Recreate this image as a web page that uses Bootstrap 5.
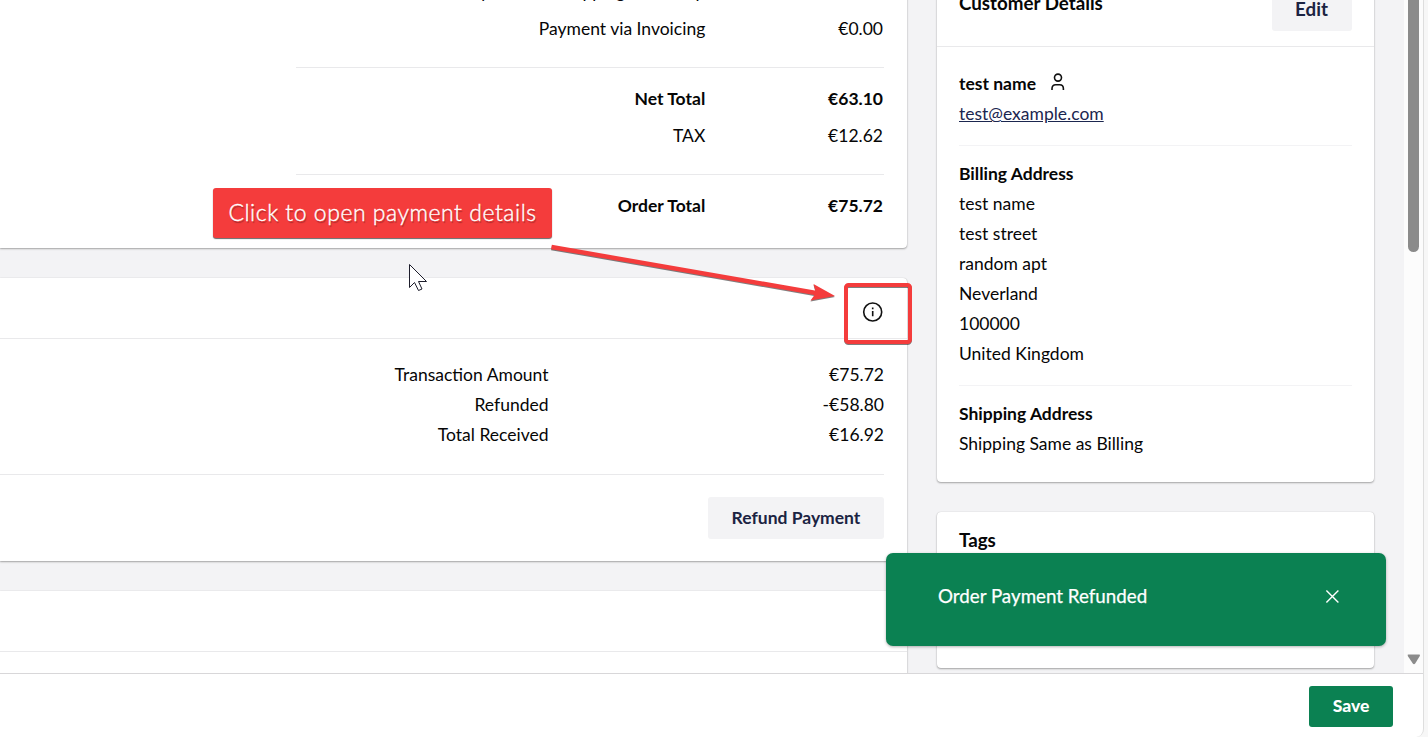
<!DOCTYPE html>
<html lang="en">
<head>
<meta charset="utf-8">
<title>Order</title>
<meta name="viewport" content="width=device-width, initial-scale=1">
<link rel="stylesheet" href="https://cdn.jsdelivr.net/npm/bootstrap@5.3.0/dist/css/bootstrap.min.css">
<script src="https://cdn.jsdelivr.net/npm/bootstrap@5.3.0/dist/js/bootstrap.bundle.min.js"></script>
<style>
  html, body { height: 100%; overflow: hidden; }
  body { font-family: Lato, sans-serif; font-size: 17.5px; line-height: 30px; color: #060606; background: #f7f7f7; }
  .app-window { width: 1424px; height: 737px; background: #fff; border-right: 1px solid #dedede; border-bottom-right-radius: 8px; overflow: hidden; }
  .workspace { height: 673px; background: #f3f3f5; overflow: hidden; }
  .main-col { width: 907px; }
  .side-col { width: 437px; margin-left: 30px; }
  .panel { background: #fff; border-radius: 4px; box-shadow: 0 1px 2px 0 rgba(0,0,0,.32), 0 0 1px rgba(0,0,0,.2); }
  .main-col .panel { border-top-left-radius: 0; border-bottom-left-radius: 0; }
  .panel-totals { height: 268px; margin-top: -20px; padding-right: 23px; margin-bottom: 30px; }
  .totals { width: 588px; margin-top: -7px; }
  .totals-row { height: 37px; line-height: 37px; padding-right: 1px; }
  .totals-name { width: 409.25px; text-align: right; white-space: nowrap; }
  .rule { border-top: 1px solid #e9e9eb; }
  .totals .rule { margin: 20px 0 12px; }
  .rule-faint { border-top: 1px solid #f3f3f5; margin: 16px 0 13px; }
  .panel-payment { height: 283px; margin-bottom: 30px; }
  .panel-top { height: 61px; border-bottom: 1px solid #e9e9eb; }
  .info-icon { margin: 7px 23px 0 0; }
  .payment-body { padding: 21px 23px 0 0; }
  .payment-name { width: 548.5px; text-align: right; }
  .panel-next { height: 120px; }
  .btn-soft { --bs-btn-bg: #f3f3f5; --bs-btn-color: #1b2342; --bs-btn-font-weight: 700; --bs-btn-border-radius: 3px; --bs-btn-border-width: 0; --bs-btn-hover-bg: #e9e9eb; font-size: 17.5px; line-height: 42px; padding: 0; }
  .btn-refund { width: 176px; margin-top: 22px; }
  .btn-edit { width: 80px; font-size: 18.75px; line-height: 40px; padding: 0 1px 2px 0; margin-bottom: 6px; }
  .btn-save { --bs-btn-bg: #0b8152; --bs-btn-color: #fff; --bs-btn-font-weight: 900; --bs-btn-border-radius: 3px; --bs-btn-border-width: 0; --bs-btn-hover-bg: #097047; --bs-btn-hover-color: #fff; width: 84px; height: 41px; padding: 0 0 2px; font-size: 17.5px; line-height: 39px; }
  .panel-customer { height: 502px; margin-top: -20px; margin-bottom: 30px; }
  .customer-top { height: 67px; padding: 0 22px; border-bottom: 1px solid #e9e9eb; }
  .customer-top .head-text { margin-bottom: 20px; }
  .customer-body { padding: 22px 22px 0; }
  .person-icon { margin: 0 0 4px 15px; }
  .mail { color: #1b264f; }
  .panel-tags { height: 156px; padding: 13px 22px; }
  .head-text { font-size: 18.75px; font-weight: 700; }
  .scroll-track { width: 19px; background: #fcfcfc; }
  .scroll-thumb { width: 11px; height: 272px; margin-top: -20px; border-radius: 6px; background: #8b8b8b; }
  .scroll-down { margin-bottom: 8px; }
  .action-bar { height: 64px; border-top: 1px solid #d8d7d9; padding: 12px 30px 0 0; }
  .toast-box { left: 886px; top: 553px; width: 500px; height: 93px; padding: 0 46px 6.5px 52px; border-radius: 7px; background: #0b8152; color: #fff; font-size: 18.75px; box-shadow: 0 1px 3px rgba(0,0,0,.3); -webkit-text-stroke: .25px #fff; }
  .callout { left: 213px; top: 188px; width: 339px; height: 50px; line-height: 49px; border-radius: 3px; background: #f43c3c; color: #fff; font-size: 23px; font-weight: 300; -webkit-text-stroke: .4px #fff; letter-spacing: .52px; text-shadow: 1px 2px 1px rgba(0,0,0,.3); box-shadow: 0 1px 1px rgba(0,0,0,.6); white-space: nowrap; }
  .overlay-art { left: 0; top: 0; pointer-events: none; }
  .marks { filter: drop-shadow(0 1px .6px rgba(0,0,0,.5)); }
</style>
</head>
<body class="position-relative">
<div class="app-window d-flex flex-column">
  <main class="workspace d-flex align-items-start">
    <div class="main-col flex-shrink-0">
      <section class="panel panel-totals d-flex justify-content-end">
        <div class="totals flex-shrink-0">
          <div class="totals-row d-flex"><span class="totals-name">Payment via Shipping on Pickup</span></div>
          <div class="totals-row d-flex justify-content-between"><span class="totals-name">Payment via Invoicing</span><span>€0.00</span></div>
          <div class="rule"></div>
          <div class="totals-row d-flex justify-content-between fw-bold"><span class="totals-name">Net Total</span><span>€63.10</span></div>
          <div class="totals-row d-flex justify-content-between"><span class="totals-name">TAX</span><span>€12.62</span></div>
          <div class="rule"></div>
          <div class="totals-row d-flex justify-content-between fw-bold"><span class="totals-name">Order Total</span><span>€75.72</span></div>
        </div>
      </section>
      <section class="panel panel-payment">
        <div class="panel-top d-flex justify-content-end align-items-center">
          <svg class="info-icon" width="22" height="22" viewBox="0 0 22 22" fill="none" stroke="#111" stroke-width="1.6"><circle cx="10.7" cy="11" r="9"/><path d="M10.7 10v5.2M10.7 6.6v1.7"/></svg>
        </div>
        <div class="payment-body">
          <div class="d-flex justify-content-between"><span class="payment-name">Transaction Amount</span><span>€75.72</span></div>
          <div class="d-flex justify-content-between"><span class="payment-name">Refunded</span><span>-€58.80</span></div>
          <div class="d-flex justify-content-between"><span class="payment-name">Total Received</span><span>€16.92</span></div>
          <div class="rule mt-4"></div>
          <div class="d-flex justify-content-end"><button class="btn btn-soft btn-refund" type="button">Refund Payment</button></div>
        </div>
      </section>
      <section class="panel panel-next"><div class="panel-top"></div></section>
    </div>
    <aside class="side-col flex-shrink-0">
      <section class="panel panel-customer">
        <div class="customer-top d-flex justify-content-between align-items-center">
          <span class="head-text">Customer Details</span>
          <button class="btn btn-soft btn-edit" type="button">Edit</button>
        </div>
        <div class="customer-body">
          <div class="d-flex align-items-center fw-bold">test name
            <svg class="person-icon" width="15" height="18" viewBox="0 0 15 18" fill="none" stroke="#111" stroke-width="1.6"><circle cx="7" cy="4.6" r="3.5"/><path d="M1 17v-1.3c0-2.5 1.4-4 3.700-4h4c2.300 0 3.700 1.500 3.700 4V17"/></svg>
          </div>
          <div><a class="mail" href="#">test@example.com</a></div>
          <div class="rule-faint"></div>
          <div class="fw-bold">Billing Address</div>
          <div>test name</div>
          <div>test street</div>
          <div>random apt</div>
          <div>Neverland</div>
          <div>100000</div>
          <div>United Kingdom</div>
          <div class="rule-faint"></div>
          <div class="fw-bold">Shipping Address</div>
          <div>Shipping Same as Billing</div>
        </div>
      </section>
      <section class="panel panel-tags"><span class="head-text">Tags</span></section>
    </aside>
    <div class="scroll-track h-100 ms-auto d-flex flex-column align-items-center justify-content-between">
      <div class="scroll-thumb"></div>
      <svg class="scroll-down" width="14" height="11" viewBox="0 0 14 11"><path d="M1.5.5h10.500q1.500 0 .8 1.400L8.200 9.400q-1.200 1.500-2.400 0L.8 1.900Q.1.5 1.5.5z" fill="#8b8b8b"/></svg>
    </div>
  </main>
  <footer class="action-bar d-flex justify-content-end align-items-start"><button class="btn btn-save" type="button">Save</button></footer>
</div>
<div class="toast-box position-absolute d-flex align-items-center justify-content-between">
  <span>Order Payment Refunded</span>
  <svg width="16" height="16" viewBox="0 0 16 16" stroke="#fff" stroke-width="1.4"><path d="M2.400 2.400l12 12M14.400 2.400L2.400 14.400"/></svg>
</div>
<div class="callout position-absolute text-center">Click to open payment details</div>
<svg class="overlay-art position-absolute" width="1428" height="737" viewBox="0 0 1428 737">
  <g class="marks">
    <path d="M551.5 247L816 293" stroke="#f43c3c" stroke-width="4.4" fill="none"/>
    <path d="M835 296L813.5 284L816 293L810.5 300.5z" fill="#f43c3c"/>
    <rect x="846" y="285" width="64" height="57" rx="2.5" fill="none" stroke="#f43c3c" stroke-width="4"/>
  </g>
  <path d="M409.5 264.5V287.5L414.5 282.5L418.5 290.5L422 289L418.5 281.5H426.5z" fill="#fff" stroke="#1d1d2b" stroke-width="1"/>
</svg>
</body>
</html>
